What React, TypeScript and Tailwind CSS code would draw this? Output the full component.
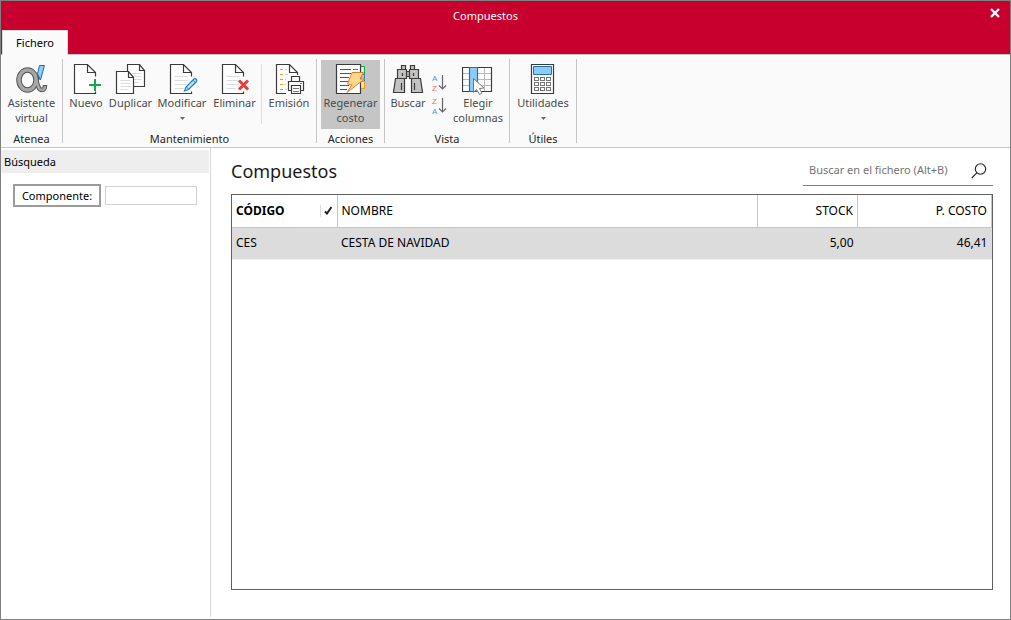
import { useState, type ReactNode } from 'react';
import { clsx } from 'clsx';

const INK = '#3b3b3b';

function Glyph({ children }: { children: ReactNode }) {
  return (
    <svg width="32" height="32" viewBox="0 0 32 32" fill="none" className="shrink-0" aria-hidden="true">
      {children}
    </svg>
  );
}

function Page({ x = 4.5, lines = true }: { x?: number; lines?: boolean }) {
  return (
    <g transform={`translate(${x} 1.5)`}>
      <path d="M21 29H0V0H13L21 8V29Z" fill="#fff" />
      {lines && <path d="M4 12H17M4 16H17M4 20H16M4 24H13" stroke="#dcdcdc" />}
      <path d="M21 12V8L13 0H0V29H21V27M13 0V8H21" stroke={INK} strokeWidth="1.2" />
    </g>
  );
}

function SmallPage({ x, y }: { x: number; y: number }) {
  return (
    <g transform={`translate(${x} ${y})`}>
      <path d="M0 0H12L17 6V22H0Z" fill="#fff" stroke={INK} strokeWidth="1.2" />
      <path d="M12 0V6H17" stroke={INK} strokeWidth="1.2" />
      <path d="M4 9H14M4 12H14M4 15H14M4 18H11" stroke="#dcdcdc" />
    </g>
  );
}

function AlphaIcon() {
  return (
    <Glyph>
      <ellipse cx="11.5" cy="17" rx="8.5" ry="10" stroke="#555" strokeWidth="5.5" />
      <path d="M19 10C21 18 21 27 26 27C28 27 29 25 29 22" stroke="#555" strokeWidth="4.5" />
      <path d="M25 10L18 24" stroke="#555" strokeWidth="3" />
      <ellipse cx="11.5" cy="17" rx="8.5" ry="10" stroke="#a6a6a6" strokeWidth="3.5" />
      <path d="M19 10C21 18 21 27 26 27C28 27 29 25 29 23" stroke="#a6a6a6" strokeWidth="2.5" />
      <path d="M23.5 2.5H28.5L24.5 17L21.5 11Z" fill="#8ecbf5" stroke="#1f6fb5" />
    </Glyph>
  );
}

function NewIcon() {
  return (
    <Glyph>
      <Page lines={false} />
      <path d="M25 16V28M19 22H31" stroke="#14a84b" strokeWidth="2" />
    </Glyph>
  );
}

function CopyIcon() {
  return (
    <Glyph>
      <SmallPage x={12.5} y={1.5} />
      <SmallPage x={1.5} y={8.5} />
    </Glyph>
  );
}

function EditIcon() {
  return (
    <Glyph>
      <Page />
      <path d="M18.5 28L20 24L28 16C29 15 31.5 16.5 30.5 18.5L22.5 26.5Z" fill="#c5e4fa" stroke="#2386cc" strokeWidth="1.3" />
      <path d="M20.5 24L22.5 26M27 17L29.5 20" stroke="#2386cc" />
    </Glyph>
  );
}

function DeleteIcon() {
  return (
    <Glyph>
      <Page x={3.5} />
      <path d="M20 17.5L29 26.5M29 17.5L20 26.5" stroke="#ee3a3a" strokeWidth="3" />
    </Glyph>
  );
}

function PrintIcon() {
  return (
    <Glyph>
      <path d="M3.5 1.5H16.5L24.5 9.5V30.5H3.5Z" fill="#fff" />
      <path d="M13 30.5H3.5V1.5H16.5L24.5 9.5V12M16.5 1.5V9.5H24.5" stroke={INK} strokeWidth="1.2" />
      <path d="M7 6.5H10M7 11.5H10M7 16.5H10M7 21.5H10M7 26.5H10" stroke="#f09a1a" />
      <path d="M12 6.5H14M12 11.5H15M12 16.5H13M11 21.5H13M12 26.5H14" stroke="#cfcfcf" />
      <path d="M18.5 18.5V13.5H26.5V18.5M18.5 27.5H15.5V18.5H30.5V27.5H27.5" fill="#fff" stroke={INK} strokeWidth="1.2" />
      <path d="M18.5 22.5H27.5V30.5H18.5Z" fill="#fff" stroke={INK} strokeWidth="1.2" />
      <path d="M20 25.5H26M20 28.5H26M27 20.5H29" stroke="#777" />
    </Glyph>
  );
}

function RegenerateIcon() {
  return (
    <Glyph>
      <path d="M25.5 3.5H29.5V11.5H25.5" fill="#d8f3df" stroke="#14a84b" />
      <path d="M25.5 11.5H29.5V18.5H25.5" fill="#8ecbf5" stroke="#2386cc" />
      <path d="M25.5 18.5H29.5V25.5H25.5" fill="#ffe0a8" stroke="#f09a1a" />
      <path d="M1.5 1.5H25.5V30.5H1.5Z" fill="#fff" stroke={INK} strokeWidth="1.2" />
      <path d="M5 6.5H16M5 10.5H16M5 14.5H14M5 18.5H14M5 22.5H14M5 26.5H12" stroke="#555" />
      <path d="M18 6.5H23" stroke="#2386cc" />
      <path d="M17 9.5H28.5L25 16H29.5L12 29.5L17 22L12.5 21Z" fill="#ffd88a" stroke="#e87b28" />
    </Glyph>
  );
}

function BinocularsIcon() {
  return (
    <Glyph>
      <g fill="#c4c2c0" stroke={INK} strokeWidth="1.2">
        <path d="M9.5 2.5H13.5V6.5H9.5ZM18.5 2.5H22.5V6.5H18.5Z" />
        <path d="M14.5 8.5H17.5V13.5H14.5Z" />
        <path d="M5.5 6.5H14.5V15.5H5.5ZM17.5 6.5H26.5V15.5H17.5Z" />
        <path d="M3.5 15.5H12.5V29.5H1.5ZM19.5 15.5H28.5L30.5 29.5H19.5Z" />
        <path d="M9.5 20V27M10.5 10V13M22.5 20V27M21.5 10V13" />
      </g>
    </Glyph>
  );
}

function ColumnsIcon() {
  return (
    <Glyph>
      <path d="M0.5 4.5H29.5V28.5H0.5Z" fill="#fff" />
      <path d="M0 10.5H29M0 16.5H29M0 22.5H29M22.5 4V28" stroke="#bababa" />
      <path d="M0.5 4.5H29.5V28.5H0.5Z" stroke={INK} strokeWidth="1.2" />
      <path d="M7.5 4.5H15.5V28.5H7.5Z" fill="#8ecbf5" stroke="#1b73b9" strokeWidth="1.2" />
      <path d="M11.5 15.5V29.5L14.5 26.5L17.5 31.5L20 30L17.5 25.5L22 25Z" fill="#fff" stroke="#777" />
    </Glyph>
  );
}

const KEYS = [14.5, 19.5, 24.5].flatMap((y) => [7.5, 13.5, 19.5].map((x) => ({ x, y })));

function CalculatorIcon() {
  return (
    <Glyph>
      <path d="M4.5 1.5H26.5V30.5H4.5Z" fill="#fff" stroke={INK} strokeWidth="1.2" />
      <path d="M6.5 3.5H24.5V11.5H6.5Z" fill="#8ecbf5" stroke="#1b73b9" />
      {KEYS.map(({ x, y }) => (
        <rect key={`${x}-${y}`} x={x} y={y} width="4" height="3" stroke="#777" />
      ))}
    </Glyph>
  );
}

function SortIcon({ desc }: { desc?: boolean }) {
  const [top, bottom] = desc ? ['Z', 'A'] : ['A', 'Z'];
  const blue = '#3f9fd8';
  const red = '#ed6a6a';

  return (
    <svg width="16" height="21" viewBox="0 0 16 21" fill="none" aria-hidden="true">
      <text x="1" y="9" fontSize="8" fontFamily="Liberation Sans, sans-serif" fill={desc ? red : blue}>{top}</text>
      <text x="1" y="19" fontSize="8" fontFamily="Liberation Sans, sans-serif" fill={desc ? blue : red}>{bottom}</text>
      <path d="M11.5 3V17M8 13.5L11.5 17L15 13.5" stroke="#666" strokeWidth="1.2" />
    </svg>
  );
}

function RibbonButton({
  icon,
  label,
  className,
  active,
  menu,
}: {
  icon: ReactNode;
  label: string;
  className: string;
  active?: boolean;
  menu?: boolean;
}) {
  return (
    <button
      type="button"
      aria-haspopup={menu ? 'menu' : undefined}
      className={clsx(
        'flex h-[69px] shrink-0 flex-col items-center pt-[3px] text-[#4a4a4a]',
        active ? 'bg-[#c5c5c5]' : 'hover:bg-[#e6e6e6]',
        className
      )}
    >
      {icon}
      <span className="whitespace-pre text-center">{label}</span>
      {menu && (
        <svg width="5" height="3" viewBox="0 0 5 3" className="mt-[7px]" aria-hidden="true">
          <path d="M0 0H5L2.5 3Z" fill="#666" />
        </svg>
      )}
    </button>
  );
}

function RibbonGroup({ title, children }: { title: string; children: ReactNode }) {
  return (
    <section aria-label={title} className="flex shrink-0 flex-col border-r border-[#c6c6c6] px-1">
      <div className="flex pt-px">{children}</div>
      <span className="mt-0.5 -mb-1 text-center leading-4 text-[#262626]">{title}</span>
    </section>
  );
}

function Ribbon() {
  return (
    <div className="flex shrink-0 border-y border-[#c6c6c6] bg-[#fafafa] py-1 text-[11px] leading-[15px]">
      <RibbonGroup title="Atenea">
        <RibbonButton icon={<AlphaIcon />} label={'Asistente\nvirtual'} className="w-[53px]" />
      </RibbonGroup>
      <RibbonGroup title="Mantenimiento">
        <RibbonButton icon={<NewIcon />} label="Nuevo" className="w-[38px]" />
        <RibbonButton icon={<CopyIcon />} label="Duplicar" className="w-[51px]" />
        <RibbonButton icon={<EditIcon />} label="Modificar" className="w-[52px]" menu />
        <RibbonButton icon={<DeleteIcon />} label="Eliminar" className="w-[53px]" />
        <div className="mt-1 mr-1 h-[60px] w-px bg-[#dcdcdc]" />
        <RibbonButton icon={<PrintIcon />} label="Emisión" className="w-[46px]" />
      </RibbonGroup>
      <RibbonGroup title="Acciones">
        <RibbonButton icon={<RegenerateIcon />} label={'Regenerar\ncosto'} className="w-[59px]" active />
      </RibbonGroup>
      <RibbonGroup title="Vista">
        <RibbonButton icon={<BinocularsIcon />} label="Buscar" className="w-[38px]" />
        <div className="flex w-6 flex-col items-center gap-0.5 pt-3">
          <button type="button" aria-label="Orden ascendente"><SortIcon /></button>
          <button type="button" aria-label="Orden descendente"><SortIcon desc /></button>
        </div>
        <RibbonButton icon={<ColumnsIcon />} label={'Elegir\ncolumnas'} className="w-[54px]" />
      </RibbonGroup>
      <RibbonGroup title="Útiles">
        <RibbonButton icon={<CalculatorIcon />} label="Utilidades" className="w-[58px]" menu />
      </RibbonGroup>
    </div>
  );
}

function TitleBar() {
  return (
    <header className="shrink-0 bg-[#c8002d] text-[11px] text-white">
      <div className="grid h-[29px] grid-cols-[1fr_auto_1fr] items-center">
        <h1 className="col-start-2 pt-px pr-10">Compuestos</h1>
        <button type="button" aria-label="Cerrar" className="mr-2.5 mb-1.5 justify-self-end">
          <svg width="10" height="10" viewBox="0 0 10 10" aria-hidden="true">
            <path d="M1 1L9 9M9 1L1 9" stroke="#fff" strokeWidth="2.4" />
          </svg>
        </button>
      </div>
      <nav className="-mb-px flex pl-px">
        <button
          type="button"
          className="relative h-[25px] w-[66px] border border-b-0 border-[#d9d9d9] bg-[#fafafa] text-black"
        >
          Fichero
        </button>
      </nav>
    </header>
  );
}

function SearchPanel() {
  return (
    <aside className="mb-0.5 w-[210px] shrink-0 border-r border-[#d9d9d9] pt-0.5 pr-px text-[11px]">
      <h2 className="h-[23px] bg-[#eee] pl-[3px] leading-6">Búsqueda</h2>
      <div className="mt-[11px] flex items-center gap-1 pl-3">
        <button type="button" id="componente" className="h-[23px] w-[88px] border-2 border-[#9b9b9b] leading-[18px]">
          Componente:
        </button>
        <input
          type="text"
          aria-labelledby="componente"
          className="h-[19px] w-[92px] border border-[#d0d0d0] px-1 outline-none"
        />
      </div>
    </aside>
  );
}

const ROWS = [{ codigo: 'CES', nombre: 'CESTA DE NAVIDAD', stock: '5,00', costo: '46,41' }];

function ItemsTable() {
  return (
    <div className="flex-1 border border-[#606060]">
      <table className="w-full table-fixed border-collapse text-[12px]">
        <colgroup>
          <col className="w-[105px]" />
          <col />
          <col className="w-[100px]" />
          <col className="w-[134px]" />
        </colgroup>
        <thead>
          <tr className="h-8 border-b border-[#c6c6c6] [&>th]:border-r [&>th]:border-[#c6c6c6] [&>th]:px-1 [&>th]:font-normal">
            <th scope="col">
              <div className="flex items-center justify-between">
                <span className="font-bold">CÓDIGO</span>
                <span className="flex h-3 items-center border-l border-[#d9d9d9] pl-[3px]">
                  <svg width="9" height="9" viewBox="0 0 9 9" fill="none" aria-hidden="true">
                    <path d="M1 5.5L3 7.5L7.5 1" stroke="#222" strokeWidth="2" />
                  </svg>
                </span>
              </div>
            </th>
            <th scope="col" className="text-left">NOMBRE</th>
            <th scope="col" className="text-right">STOCK</th>
            <th scope="col" className="text-right">P. COSTO</th>
          </tr>
        </thead>
        <tbody>
          {ROWS.map((row) => (
            <tr key={row.codigo} className="h-8 border-b border-[#efefef] bg-[#dcdcdc] [&>td]:px-1">
              <td>{row.codigo}</td>
              <td>{row.nombre}</td>
              <td className="text-right">{row.stock}</td>
              <td className="text-right">{row.costo}</td>
            </tr>
          ))}
        </tbody>
      </table>
    </div>
  );
}

export default function App() {
  const [query, setQuery] = useState('');

  return (
    <div className="flex min-h-screen flex-col border border-[#808080] bg-white font-['Noto_Sans',sans-serif] text-black">
      <TitleBar />
      <Ribbon />
      <div className="flex flex-1">
        <SearchPanel />
        <main className="flex min-w-0 flex-1 flex-col pt-2 pr-[17px] pb-[29px] pl-5">
          <div className="mb-2 flex h-[30px] items-center justify-between">
            <h2 className="text-[18px] leading-[30px] text-[#1a1a1a]">Compuestos</h2>
            <label className="flex h-full w-[190px] items-center border-b border-[#808080] pr-1.5 pl-1.5">
              <input
                type="search"
                aria-label="Buscar en el fichero"
                placeholder="Buscar en el fichero (Alt+B)"
                value={query}
                onChange={(e) => setQuery(e.target.value)}
                className="min-w-0 flex-1 text-[11px] outline-none placeholder:text-[#737373]"
              />
              <svg width="16" height="16" viewBox="0 0 16 16" fill="none" stroke="#222" strokeWidth="1.1" aria-hidden="true">
                <circle cx="9.5" cy="6" r="5.2" />
                <path d="M5.8 9.8L0.8 15" />
              </svg>
            </label>
          </div>
          <ItemsTable />
        </main>
      </div>
    </div>
  );
}
